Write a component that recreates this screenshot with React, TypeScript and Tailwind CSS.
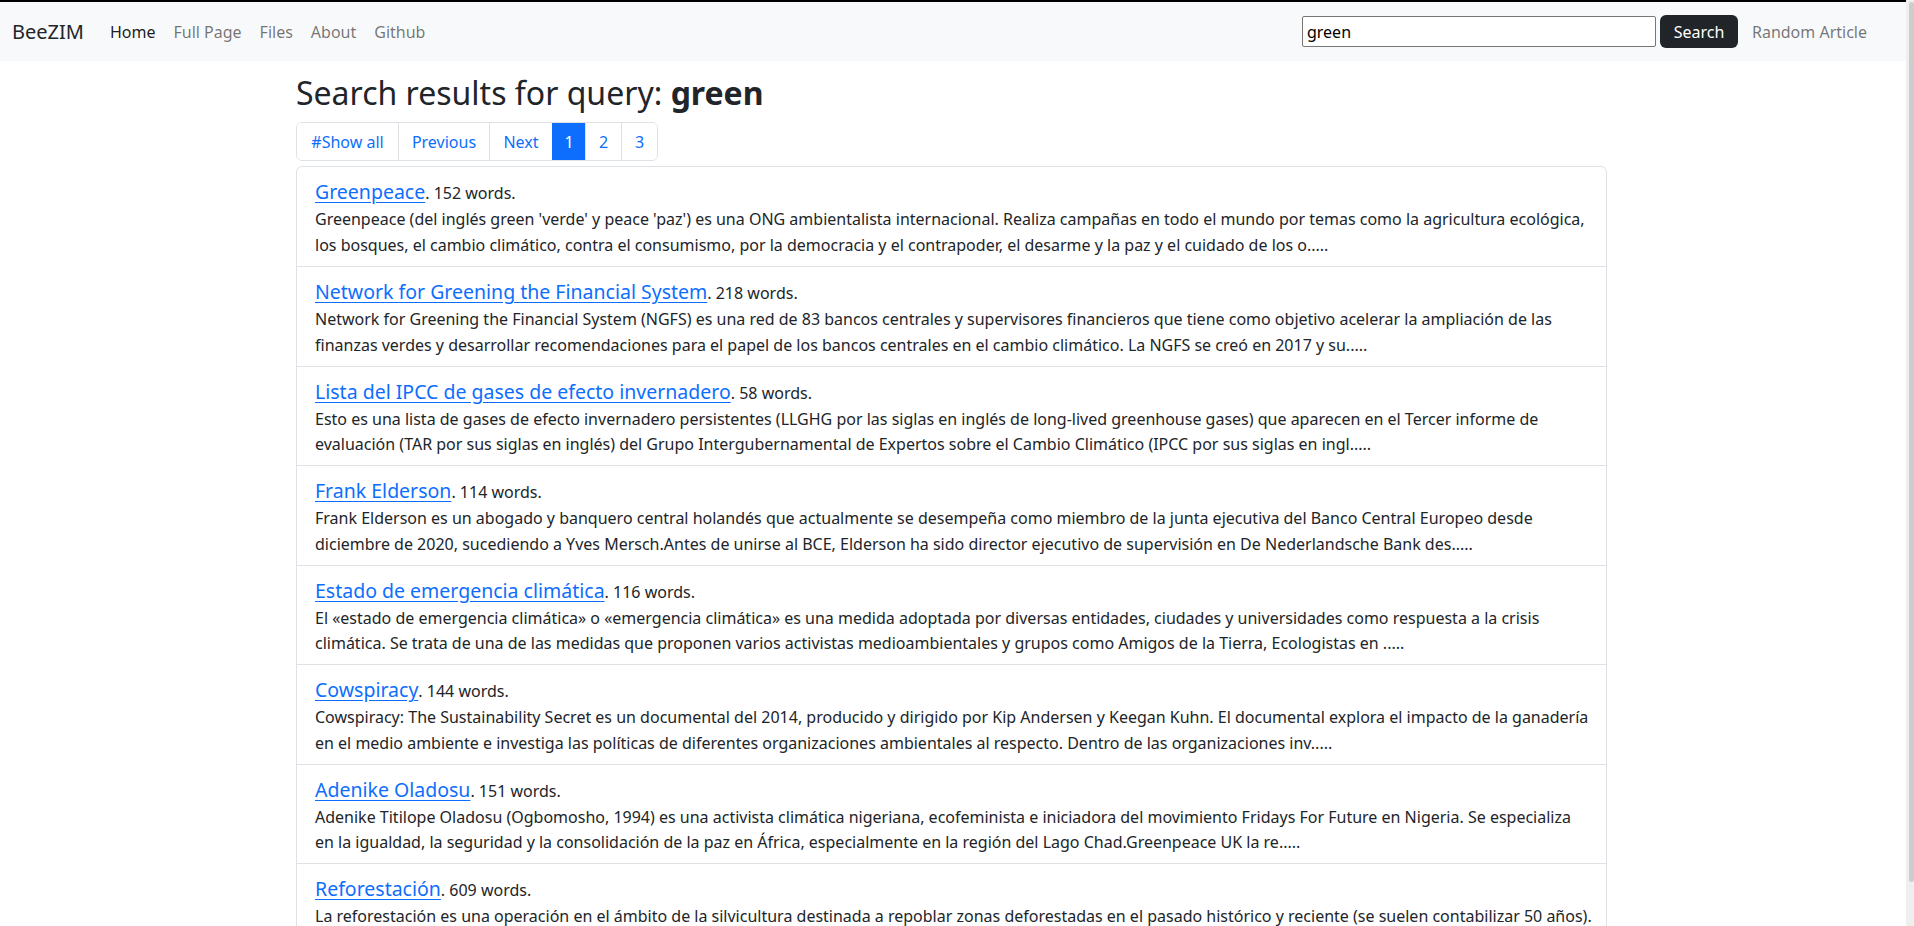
import React from 'react'

type Result = {
  title: string
  words: number
  lines: [string, string]
}

const results: Result[] = [
  {
    title: 'Greenpeace',
    words: 152,
    lines: [
      "Greenpeace (del inglés green 'verde' y peace 'paz') es una ONG ambientalista internacional. Realiza campañas en todo el mundo por temas como la agricultura ecológica,",
      'los bosques, el cambio climático, contra el consumismo, por la democracia y el contrapoder, el desarme y la paz y el cuidado de los o.....',
    ],
  },
  {
    title: 'Network for Greening the Financial System',
    words: 218,
    lines: [
      'Network for Greening the Financial System (NGFS) es una red de 83 bancos centrales y supervisores financieros que tiene como objetivo acelerar la ampliación de las',
      'finanzas verdes y desarrollar recomendaciones para el papel de los bancos centrales en el cambio climático. La NGFS se creó en 2017 y su.....',
    ],
  },
  {
    title: 'Lista del IPCC de gases de efecto invernadero',
    words: 58,
    lines: [
      'Esto es una lista de gases de efecto invernadero persistentes (LLGHG por las siglas en inglés de long-lived greenhouse gases) que aparecen en el Tercer informe de',
      'evaluación (TAR por sus siglas en inglés) del Grupo Intergubernamental de Expertos sobre el Cambio Climático (IPCC por sus siglas en ingl.....',
    ],
  },
  {
    title: 'Frank Elderson',
    words: 114,
    lines: [
      'Frank Elderson es un abogado y banquero central holandés que actualmente se desempeña como miembro de la junta ejecutiva del Banco Central Europeo desde',
      'diciembre de 2020, sucediendo a Yves Mersch.Antes de unirse al BCE, Elderson ha sido director ejecutivo de supervisión en De Nederlandsche Bank des.....',
    ],
  },
  {
    title: 'Estado de emergencia climática',
    words: 116,
    lines: [
      'El «estado de emergencia climática» o «emergencia climática» es una medida adoptada por diversas entidades, ciudades y universidades como respuesta a la crisis',
      'climática. Se trata de una de las medidas que proponen varios activistas medioambientales y grupos como Amigos de la Tierra, Ecologistas en .....',
    ],
  },
  {
    title: 'Cowspiracy',
    words: 144,
    lines: [
      'Cowspiracy: The Sustainability Secret es un documental del 2014, producido y dirigido por Kip Andersen y Keegan Kuhn. El documental explora el impacto de la ganadería',
      'en el medio ambiente e investiga las políticas de diferentes organizaciones ambientales al respecto. Dentro de las organizaciones inv.....',
    ],
  },
  {
    title: 'Adenike Oladosu',
    words: 151,
    lines: [
      'Adenike Titilope Oladosu (Ogbomosho, 1994) es una activista climática nigeriana, ecofeminista e iniciadora del movimiento Fridays For Future en Nigeria. Se especializa',
      'en la igualdad, la seguridad y la consolidación de la paz en África, especialmente en la región del Lago Chad.Greenpeace UK la re.....',
    ],
  },
  {
    title: 'Reforestación',
    words: 609,
    lines: [
      'La reforestación es una operación en el ámbito de la silvicultura destinada a repoblar zonas deforestadas en el pasado histórico y reciente (se suelen contabilizar 50 años).',
      'Los motivos de la reforestación pueden ser muy variados, desde la recuperación de hábitats naturales hasta la producción de madera y la protección del su.....',
    ],
  },
]

// page links: label + width in px (border included)
const pages: [string, string][] = [
  ['#Show all', 'w-[101px]'],
  ['Previous', 'w-[91px]'],
  ['Next', 'w-[63px]'],
  ['1', 'w-[33px]'],
  ['2', 'w-[36px]'],
  ['3', 'w-[36px]'],
]

export default function App() {
  return (
    <div className="min-h-screen bg-white pr-[8px] text-[#212529] font-['Noto_Sans',sans-serif]">
      {/* Navbar */}
      <nav className="h-[61px] border-t-2 border-black bg-[#f8f9fa] flex items-center justify-between pl-[12px] pr-[30px]">
        <div className="flex items-center">
          <a className="text-[20px] text-[#212529] mr-[17px]">BeeZIM</a>
          <div className="flex items-center text-[16px]">
            <a className="px-[9px] text-[rgba(0,0,0,0.9)]">Home</a>
            <a className="px-[9px] text-[rgba(0,0,0,0.55)]">Full Page</a>
            <a className="px-[9px] text-[rgba(0,0,0,0.55)]">Files</a>
            <a className="px-[9px] text-[rgba(0,0,0,0.55)]">About</a>
            <a className="px-[9px] text-[rgba(0,0,0,0.55)]">Github</a>
          </div>
        </div>
        <div className="flex items-center">
          <input
            readOnly
            value="green"
            className="w-[354px] h-[31px] border border-[#767676] rounded-[2px] bg-white px-[4px] text-[16px] text-black outline-none"
          />
          <button className="ml-[4px] w-[78px] h-[33px] bg-[#212529] text-white rounded-[6px] text-[16px]">
            Search
          </button>
          <a className="ml-[5px] px-[9px] text-[16px] text-[rgba(0,0,0,0.55)]">Random Article</a>
        </div>
      </nav>

      {/* Content */}
      <div className="ml-[296px] w-[1311px] pt-[13px]">
        <h2 className="text-[32px] leading-[1.2] mb-[10px]">
          Search results for query: <b>green</b>
        </h2>

        <div className="flex mb-[5px]">
          <div className="flex border border-[#dee2e6] rounded-[6px] overflow-hidden">
            {pages.map(([p, w], i) => (
              <a
                key={p}
                className={`${w} h-[37px] flex items-center justify-center text-[16px] ${
                  i > 0 ? 'border-l' : ''
                } ${p === '1' ? 'bg-[#0d6efd] text-white border-[#0d6efd]' : 'text-[#0d6efd] bg-white border-[#dee2e6]'}`}
              >
                {p}
              </a>
            ))}
          </div>
        </div>

        <div className="border border-[#dee2e6] rounded-[6px] divide-y divide-[#dee2e6]">
          {results.map((r) => (
            <div key={r.title} className="px-[18px] pt-[10px] pb-[7.4px]">
              <div className="h-[30px] leading-[30px]">
                <a className="text-[19.5px] text-[#0d6efd] underline underline-offset-[3px]">{r.title}</a>
                <span className="text-[16px]">. {r.words} words.</span>
              </div>
              <p className="text-[16px] leading-[25.6px]">
                <span className="block whitespace-nowrap">{r.lines[0]}</span>
                <span className="block whitespace-nowrap">{r.lines[1]}</span>
              </p>
            </div>
          ))}
        </div>
      </div>

      {/* window scrollbar */}
      <div className="fixed top-0 right-0 h-screen w-[8px] bg-[#efefef]">
        <div className="ml-[3px] mt-[2px] h-[880px] w-[5px] rounded-full bg-[#cdcdcd]" />
      </div>
    </div>
  )
}
